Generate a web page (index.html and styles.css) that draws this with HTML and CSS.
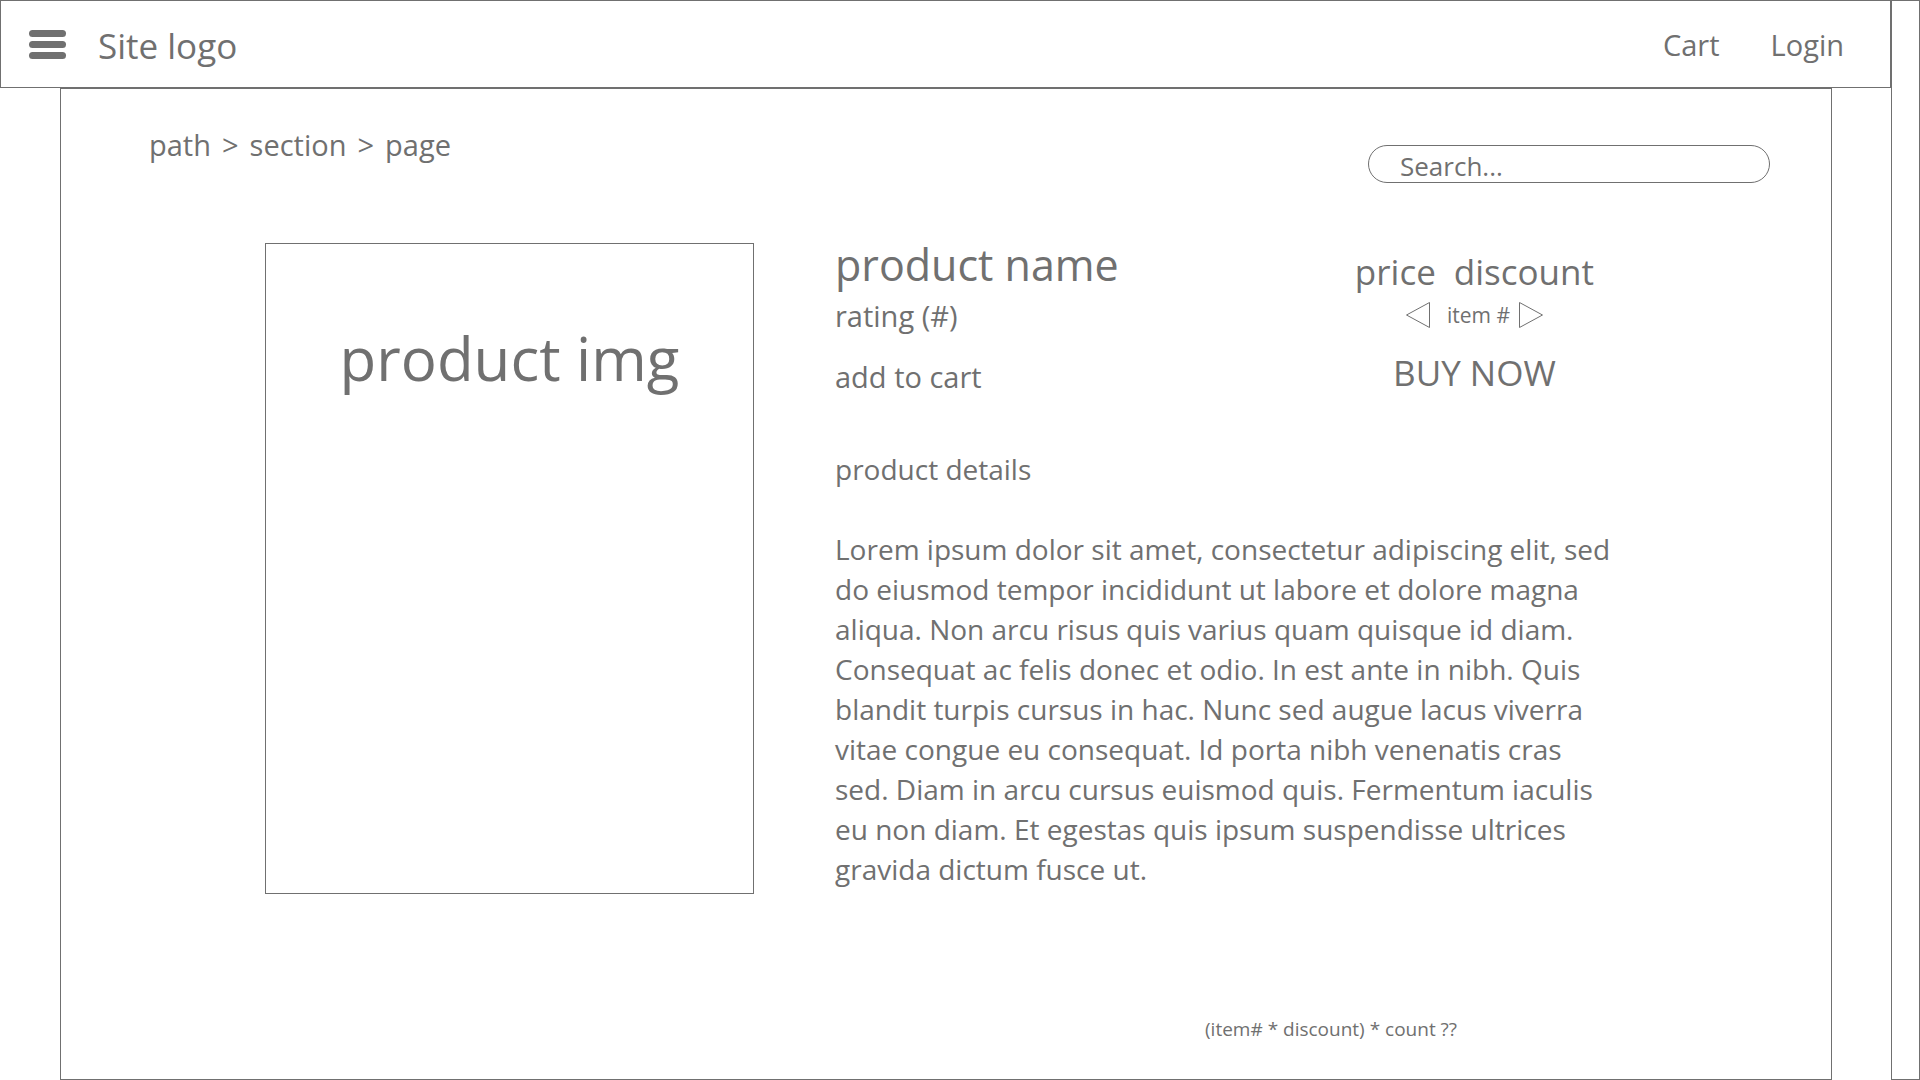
FILE: index.html
```html
<!DOCTYPE html>
<html lang="en">
<head>
<meta charset="utf-8">
<meta name="viewport" content="width=device-width, initial-scale=1">
<title>Product name</title>
<link rel="stylesheet" href="styles.css">
</head>
<body>
<div class="shell">
  <div class="site">
    <header class="topbar">
      <button class="menu" type="button" aria-label="Menu">
        <span class="menu-bar"></span><span class="menu-bar"></span><span class="menu-bar"></span>
      </button>
      <a class="logo" href="#">Site logo</a>
      <nav class="account">
        <a href="#">Cart</a>
        <a href="#">Login</a>
      </nav>
    </header>
    <main class="page">
      <div class="tools">
        <nav class="crumbs" aria-label="Breadcrumb">
          <a href="#">path</a><span>&gt;</span><a href="#">section</a><span>&gt;</span><a href="#">page</a>
        </nav>
        <form class="search">
          <input class="search-box" type="search" aria-label="Search" placeholder="Search...">
        </form>
      </div>
      <div class="product">
        <div class="picture">product img</div>
        <div class="info">
          <div class="summary">
            <div class="heading">
              <h1 class="name">product name</h1>
              <p class="rating">rating (#)</p>
              <button class="add" type="button">add to cart</button>
            </div>
            <div class="offer">
              <p class="prices"><span>price</span><span>discount</span></p>
              <div class="stepper">
                <button class="step" type="button" aria-label="Fewer">
                  <svg width="26" height="28" viewBox="0 0 26 28"><path d="M24.500 1.500V26.500L1.500 14Z"/></svg>
                </button>
                <span class="count">item #</span>
                <button class="step" type="button" aria-label="More">
                  <svg width="26" height="28" viewBox="0 0 26 28"><path d="M1.500 1.500V26.500L24.500 14Z"/></svg>
                </button>
              </div>
              <button class="buy" type="button">BUY NOW</button>
            </div>
          </div>
          <h2 class="details-title">product details</h2>
          <p class="details">Lorem ipsum dolor sit amet, consectetur adipiscing elit, sed<br>
          do eiusmod tempor incididunt ut labore et dolore magna<br>
          aliqua. Non arcu risus quis varius quam quisque id diam.<br>
          Consequat ac felis donec et odio. In est ante in nibh. Quis<br>
          blandit turpis cursus in hac. Nunc sed augue lacus viverra<br>
          vitae congue eu consequat. Id porta nibh venenatis cras<br>
          sed. Diam in arcu cursus euismod quis. Fermentum iaculis<br>
          eu non diam. Et egestas quis ipsum suspendisse ultrices<br>
          gravida dictum fusce ut.</p>
        </div>
      </div>
      <p class="total">(item# * discount) * count ??</p>
    </main>
  </div>
  <aside class="rail" aria-label="Side rail"></aside>
</div>
</body>
</html>
```
FILE: styles.css
```css
* { box-sizing: border-box; }

body {
  margin: 0;
  background: #fff;
  color: #707070;
  font: 29px/40px "Open Sans", "Noto Sans", sans-serif;
}

h1, h2, p { margin: 0; font-weight: 400; }
a { color: inherit; text-decoration: none; }
button {
  padding: 0;
  border: 0;
  background: none;
  color: inherit;
  font: inherit;
  cursor: pointer;
}

.shell { display: flex; min-height: 100vh; }
.site { flex: 1; display: flex; flex-direction: column; }
.rail { width: 29px; border: 1px solid #707070; }

.topbar {
  display: flex;
  align-items: center;
  height: 88px;
  padding: 0 46px 0 28px;
  border: 1px solid #707070;
}
.menu { display: grid; gap: 4px; width: 37px; }
.menu-bar { height: 7px; border-radius: 4px; background: #707070; }
.logo { margin-left: 32px; padding-top: 4px; font-size: 35px; }
.account { display: flex; gap: 51px; margin-left: auto; padding-top: 1px; }

.page {
  flex: 1;
  margin: 0 59px 0 60px;
  padding: 36px 61px 20px 88px;
  border: 1px solid #707070;
}
.tools { display: flex; justify-content: space-between; align-items: flex-start; }
.crumbs { display: flex; gap: 11px; }
.search { padding-top: 20px; }
.search-box {
  display: block;
  width: 402px;
  height: 38px;
  padding: 3px 31px 0;
  border: 1px solid #707070;
  border-radius: 20px;
  background: none;
  color: inherit;
  font: inherit;
  font-size: 26px;
  outline: 0;
}
.search-box::placeholder { color: inherit; opacity: 1; }

.product { display: flex; gap: 81px; margin: 53px 0 0 116px; }
.picture {
  width: 489px;
  height: 651px;
  margin-top: 7px;
  padding-top: 74px;
  border: 1px solid #707070;
  font-size: 60px;
  line-height: 80px;
  text-align: center;
}
.info { width: 800px; }
.summary { display: flex; justify-content: space-between; height: 160px; }
.name { font-size: 43px; line-height: 58px; }
.rating { margin-top: 2px; }
.add { display: block; margin-top: 21px; }
.offer {
  display: flex;
  flex-direction: column;
  align-items: center;
  padding: 16px 41px 0 0;
  font-size: 35px;
}
.prices { display: flex; gap: 18px; }
.stepper { display: flex; align-items: center; gap: 8px; margin-top: 9px; }
.step { height: 28px; }
.step svg { display: block; fill: none; stroke: #707070; }
.count { padding-left: 8px; font-size: 21px; line-height: 28px; }
.buy { margin-top: 24px; }
.details-title { margin-top: 53px; font-size: 28px; }
.details { margin-top: 40px; font-size: 28px; white-space: nowrap; }
.total { margin: 121px 0 0 1056px; font-size: 19px; line-height: 28px; }
```
